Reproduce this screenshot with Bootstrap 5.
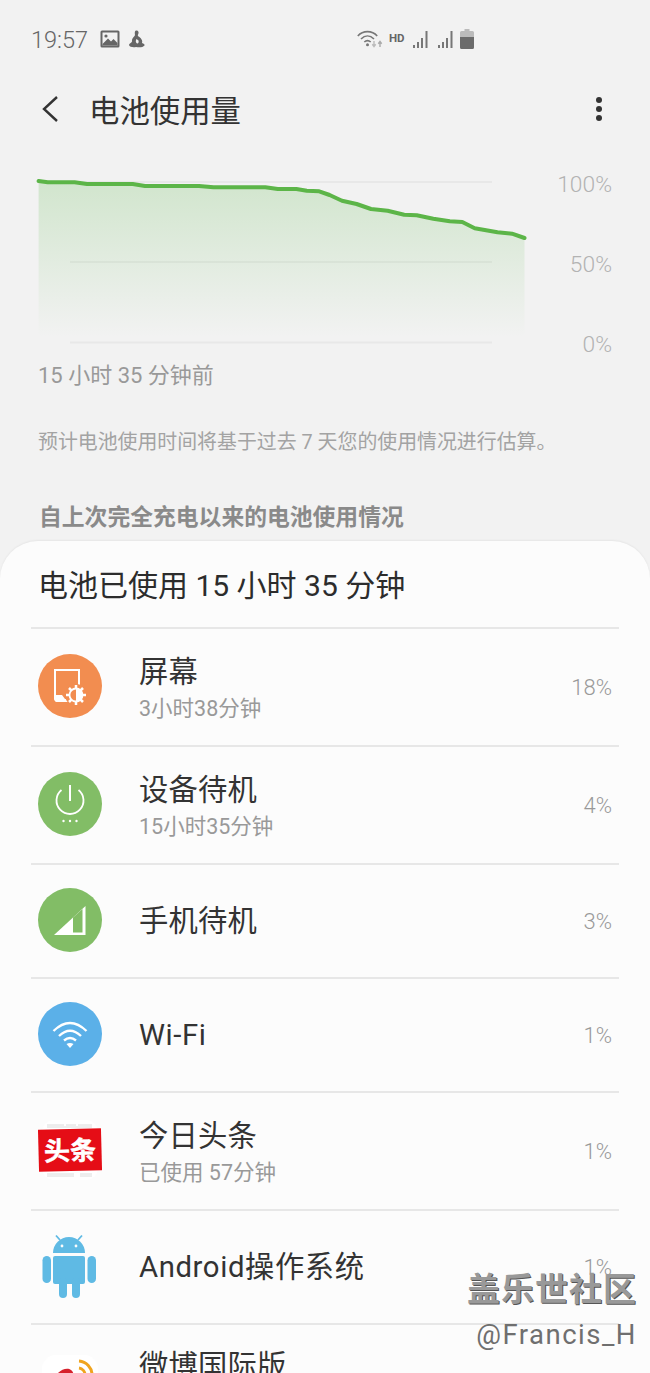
<!DOCTYPE html>
<html lang="zh-CN">
<head>
    <meta charset="UTF-8">
    <meta name="viewport" content="width=device-width, initial-scale=1.0">
    <title>电池使用量</title>
    <link href="https://cdn.jsdelivr.net/npm/bootstrap@5.3.0/dist/css/bootstrap.min.css" rel="stylesheet">
    <style>
        html, body {
            height: 1373px;
            overflow: hidden;
        }
        body {
            background-color: #f2f2f2;
            font-family: Roboto, "Noto Sans CJK SC", sans-serif;
            position: relative;
        }
        .status-bar {
            height: 78px;
            padding: 0 176px 0 31px;
            color: #666;
        }
        .status-time { font-size: 23.5px; font-weight: 300; width: 69px; margin-top: 3px; }
        .status-hd { font-size: 11.5px; font-weight: 700; width: 18px; margin: 0 5px 0 6px; }
        .status-battery { margin-left: 6px; }
        .title-bar {
            height: 66px;
            padding: 0 47px 4px 42px;
        }
        .title-text { font-size: 30.400px; color: #333; margin-left: 31px; margin-top: 6px; }
        .chart-labels {
            padding: 29px 38px 0 0;
            gap: 56px;
            color: #b3b3b3;
            font-size: 22.8px;
            font-weight: 300;
            line-height: 24px;
        }
        .chart-caption { padding-left: 38px; padding-top: 1px; font-size: 22px; line-height: 40px; color: #999; }
        .chart-note { padding-left: 38px; margin-top: 26px; font-size: 19.9px; line-height: 40px; color: #a3a3a3; padding-top: 1px; }
        .usage-heading { padding-left: 39px; margin-top: 35px; font-size: 22.8px; line-height: 40px; color: #8a8a8a; font-weight: 700; }
        .sheet {
            margin-top: 3px;
            background: #fcfcfc;
            border-radius: 38px 38px 0 0;
            box-shadow: 0 -1px 2px rgba(0, 0, 0, 0.05);
        }
        .sheet-heading { height: 86px; padding: 2px 38px 0; font-size: 30px; color: #2c2c2c; }
        .app-list { margin: 0 31px; }
        .list-group-item.app-row {
            background: transparent;
            border: 0;
            border-top: 2px solid #e7e7e7;
            border-radius: 0;
            padding: 0 7px 3px;
            height: 114px;
        }
        .list-group-item.app-row.tall { height: 118px; }
        .list-group-item.app-row.last { align-items: flex-start !important; padding-top: 23px; }
        .app-icon { width: 64px; height: 64px; margin-right: 37px; flex: none; display: block; }
        .app-name { font-size: 29.300px; line-height: 36px; color: #333; letter-spacing: 0.2px; }
        .app-name.single { margin-top: 2px; }
        .app-name.latin { letter-spacing: 0.6px; }
        .app-text { margin-top: 6px; }
        .app-sub { font-size: 21.500px; line-height: 28px; margin-top: 5px; color: #999; }
        .app-pct { font-size: 22px; font-weight: 300; color: #999; margin-top: 4px; }
        .tt-text { font-family: "Noto Sans CJK SC", sans-serif; font-weight: 700; font-size: 26px; fill: #fff; stroke: #fff; stroke-width: 0.5px; }
        .watermark {
            position: absolute;
            right: 13px;
            top: 1268px;
            text-align: right;
        }
        .wm-top { font-size: 33px; line-height: 44px; font-weight: 700; color: #999; text-shadow: 1px 1px 0 #555; letter-spacing: 1px; }
        .wm-bot { font-size: 27.500px; line-height: 44px; color: #6f6f6f; letter-spacing: 1.500px; margin-top: 1px; }
    </style>
</head>
<body>
    <div class="status-bar d-flex align-items-center">
        <span class="status-time">19:57</span>
        <svg width="20" height="18" viewBox="0 0 20 18">
            <rect width="19" height="17" x="0.5" y="0.5" rx="1.5" fill="#666"/>
            <rect width="15" height="13" x="2.5" y="2.5" fill="#f2f2f2"/>
            <circle cx="6" cy="6" r="1.6" fill="#666"/>
            <path d="M2.5 14 L8 8.5 L11 11.5 L13.5 9 L17.5 13 V15.5 H2.5 Z" fill="#666"/>
        </svg>
        <svg width="18" height="18" viewBox="0 0 18 18" class="ms-2 me-auto">
            <path d="M8.500 0.500 C10.500 0.500 11 2.500 10.300 4 C9.700 5 9.500 5.500 10.500 6.500 C13 8 15 10.500 14 13 C15.500 13.500 17 14.500 16.500 15.500 C15 17.500 11 17.500 8 17 C5 17.500 1.500 17 1 15 C1 13.500 3.500 13 4 11.500 C3.500 9.500 5 7.500 6.500 6 C7.500 5 6.500 3.500 6.800 2.500 C7 1 7.500 0.500 8.500 0.500 Z M8.500 9 C7.500 10.500 7.500 12.500 9 13.500 C10.500 13.800 11 12 10.500 10.500 Z" fill="#666" fill-rule="evenodd"/>
        </svg>
        <svg width="26" height="18" viewBox="0 0 26 18">
            <g fill="none" stroke="#777" stroke-width="1.6">
                <path d="M0.8 6 C6 0.2 15 0.2 20.2 6"/>
                <path d="M4 9 C8 5 13 5 17 9"/>
                <path d="M7.3 12 C9.5 10 11.5 10 13.7 12"/>
            </g>
            <circle cx="10.5" cy="14.8" r="1.5" fill="#777"/>
            <path d="M17 11 V16 M15.3 14.3 L17 16.5 L18.7 14.3" fill="none" stroke="#bbb" stroke-width="1.4"/>
            <path d="M23 17 V12 M21.3 13.7 L23 11.5 L24.7 13.7" fill="none" stroke="#aaa" stroke-width="1.4"/>
        </svg>
        <span class="status-hd">HD</span>
        <svg width="17" height="18" viewBox="0 0 17 18">
            <path d="M1 15h2v3H1zM5 12h2v6H5zM9 8h2v10H9zM13.5 1h2v17h-2z" fill="#777"/>
        </svg>
        <svg width="17" height="18" viewBox="0 0 17 18" class="ms-2">
            <path d="M1 15h2v3H1zM5 12h2v6H5zM9 8h2v10H9zM13.5 1h2v17h-2z" fill="#777"/>
        </svg>
        <svg width="14" height="20" viewBox="0 0 14 20" class="status-battery">
            <path d="M4.5 0h5v2h3a1.5 1.5 0 0 1 1.5 1.5V8H0V3.500A1.500 1.500 0 0 1 1.500 2h3z" fill="#bbb"/>
            <path d="M0 8h14v10.500a1.500 1.500 0 0 1-1.500 1.500h-11A1.500 1.500 0 0 1 0 18.500z" fill="#6b6b6b"/>
        </svg>
    </div>

    <div class="title-bar d-flex align-items-center">
        <svg width="16" height="26" viewBox="0 0 16 26">
            <path d="M15 1 L2 13 L15 25" fill="none" stroke="#333" stroke-width="2.400"/>
        </svg>
        <span class="title-text me-auto">电池使用量</span>
        <svg width="8" height="26" viewBox="0 0 8 26">
            <circle cx="4" cy="4" r="3" fill="#333"/>
            <circle cx="4" cy="13" r="3" fill="#333"/>
            <circle cx="4" cy="22" r="3" fill="#333"/>
        </svg>
    </div>

    <div class="d-flex justify-content-between" style="height:211px">
        <svg width="540" height="211" viewBox="0 144 540 211">
            <defs>
                <linearGradient id="chartFill" x1="0" y1="0" x2="0" y2="1">
                    <stop offset="0" stop-color="#5cb84a" stop-opacity="0.22"/>
                    <stop offset="1" stop-color="#5cb84a" stop-opacity="0"/>
                </linearGradient>
            </defs>
            <g stroke="#e8e8e8" stroke-width="2">
                <line x1="70" x2="492" y1="182" y2="182"/>
                <line x1="70" x2="492" y1="262" y2="262"/>
                <line x1="70" x2="492" y1="342.500" y2="342.500"/>
            </g>
            <path fill="url(#chartFill)" d="M38.600 181 L47.700 182.300 L74.600 182.300 L87 184 L132.700 184 L145 186 L199 186 L213.500 187.300 L265.300 187.300 L277.800 189 L296.400 189 L306.800 190.700 L319.200 191.300 L329.600 195 L342 200.700 L356.600 204 L371 209 L387.600 210.700 L404.200 214.700 L416.700 215.300 L433.300 218.700 L449.800 221.300 L462.300 222 L474.700 228.300 L497.500 232.300 L512 233.700 L524.500 238 V337 H38.600 Z"/>
            <path fill="none" stroke="#5cb548" stroke-width="4" stroke-linejoin="round" stroke-linecap="round" d="M38.600 181 L47.700 182.300 L74.600 182.300 L87 184 L132.700 184 L145 186 L199 186 L213.500 187.300 L265.300 187.300 L277.800 189 L296.400 189 L306.800 190.700 L319.200 191.300 L329.600 195 L342 200.700 L356.600 204 L371 209 L387.600 210.700 L404.200 214.700 L416.700 215.300 L433.300 218.700 L449.800 221.300 L462.300 222 L474.700 228.300 L497.500 232.300 L512 233.700 L524.500 238"/>
        </svg>
        <div class="chart-labels d-flex flex-column text-end">
            <span>100%</span>
            <span>50%</span>
            <span>0%</span>
        </div>
    </div>

    <div class="chart-caption">15 小时 35 分钟前</div>
    <div class="chart-note">预计电池使用时间将基于过去 7 天您的使用情况进行估算。</div>
    <div class="usage-heading">自上次完全充电以来的电池使用情况</div>

    <div class="sheet">
        <div class="sheet-heading d-flex align-items-center">电池已使用 15 小时 35 分钟</div>
        <div class="list-group app-list">
            <div class="list-group-item app-row tall d-flex align-items-center">
                <svg class="app-icon" viewBox="0 0 64 64">
                    <circle cx="32" cy="32" r="32" fill="#f28d50"/>
                    <path d="M32 47 H20 C17.500 47 17 45 17 43 V16 H41 V31" fill="none" stroke="#fff" stroke-width="2"/>
                    <path d="M17 41 H24 L27 45 H32 V48 H19 C17 48 16 46 16 44 Z" fill="#fff"/>
                    <circle cx="38" cy="41" r="11" fill="#f28d50"/>
                    <g stroke="#fff" stroke-width="2.500">
                        <path d="M38 31 V51 M28 41 H48 M31 34 L45 48 M45 34 L31 48"/>
                    </g>
                    <circle cx="38" cy="41" r="6.500" fill="#f28d50" stroke="#fff" stroke-width="1.800"/>
                    <path d="M38 34.500 A6.500 6.500 0 0 1 38 47.500 Z" fill="#fff"/>
                </svg>
                <div class="app-text me-auto">
                    <div class="app-name">屏幕</div>
                    <div class="app-sub">3小时38分钟</div>
                </div>
                <span class="app-pct">18%</span>
            </div>
            <div class="list-group-item app-row tall d-flex align-items-center">
                <svg class="app-icon" viewBox="0 0 64 64">
                    <circle cx="32" cy="32" r="32" fill="#82bd66"/>
                    <path d="M23.500 18 A13.500 13.500 0 1 0 40.500 18" fill="none" stroke="#fff" stroke-width="1.800"/>
                    <path d="M32 13 V29" stroke="#fff" stroke-width="2"/>
                    <circle cx="25.500" cy="49" r="1.200" fill="#fff"/>
                    <circle cx="32" cy="49" r="1.200" fill="#fff"/>
                    <circle cx="38.500" cy="49" r="1.200" fill="#fff"/>
                </svg>
                <div class="app-text me-auto">
                    <div class="app-name">设备待机</div>
                    <div class="app-sub">15小时35分钟</div>
                </div>
                <span class="app-pct">4%</span>
            </div>
            <div class="list-group-item app-row d-flex align-items-center">
                <svg class="app-icon" viewBox="0 0 64 64">
                    <circle cx="32" cy="32" r="32" fill="#82bd66"/>
                    <path d="M16 47 L47.500 18 V47 Z" fill="#fff"/>
                    <path d="M35 29.500 L44.500 21 V44.500 H35 Z" fill="#82bd66"/>
                </svg>
                <div class="app-name single me-auto">手机待机</div>
                <span class="app-pct">3%</span>
            </div>
            <div class="list-group-item app-row d-flex align-items-center">
                <svg class="app-icon" viewBox="0 0 64 64">
                    <circle cx="32" cy="32" r="32" fill="#5bb0e8"/>
                    <g fill="none" stroke="#fff" stroke-width="2.400">
                        <path d="M15.500 29 Q32 13 48.500 29"/>
                        <path d="M21 34 Q32 23.500 43 34"/>
                        <path d="M26 38.500 Q32 33.500 38 38.500"/>
                    </g>
                    <path d="M28.500 42 Q32 40 35.500 42 L32 46 Z" fill="#fff"/>
                </svg>
                <div class="app-name single latin me-auto">Wi-Fi</div>
                <span class="app-pct">1%</span>
            </div>
            <div class="list-group-item app-row tall d-flex align-items-center">
                <svg class="app-icon" viewBox="0 0 64 64">
                    <rect x="4" y="2" width="56" height="60" rx="12" fill="#fff"/>
                    <path d="M9 7 H26 M28 7 H38 M40 7 H54 M9 9 H54 M9 56 H36 M42 56 H54 M9 58 H36 M42 58 H54" stroke="#dcdcdc" stroke-width="1"/>
                    <g transform="rotate(-1.500 32 32)">
                        <rect x="0.500" y="11" width="63" height="42" fill="#e50d16"/>
                        <text class="tt-text" x="32" y="42" text-anchor="middle">头条</text>
                    </g>
                </svg>
                <div class="app-text me-auto">
                    <div class="app-name">今日头条</div>
                    <div class="app-sub">已使用 57分钟</div>
                </div>
                <span class="app-pct">1%</span>
            </div>
            <div class="list-group-item app-row d-flex align-items-center">
                <svg class="app-icon" viewBox="0 0 64 64">
                    <g fill="#5fbae4">
                        <path d="M15 19 A16 16 0 0 1 47 19 Z"/>
                        <rect x="15" y="22" width="32" height="28" rx="2"/>
                        <rect x="4.500" y="22" width="8.500" height="27" rx="4.250"/>
                        <rect x="49.500" y="22" width="8.500" height="27" rx="4.250"/>
                        <rect x="21" y="44" width="8" height="20" rx="4"/>
                        <rect x="34" y="44" width="8" height="20" rx="4"/>
                    </g>
                    <path d="M22 6 L18 1.500 M40 6 L44 1.500" stroke="#5fbae4" stroke-width="1.800"/>
                    <circle cx="24" cy="12" r="1.400" fill="#fcfcfc"/>
                    <circle cx="38" cy="12" r="1.400" fill="#fcfcfc"/>
                </svg>
                <div class="app-name single latin me-auto">Android操作系统</div>
                <span class="app-pct">1%</span>
            </div>
            <div class="list-group-item app-row last d-flex align-items-center">
                <svg class="app-icon" viewBox="0 0 64 64">
                    <rect x="4" y="7" width="56" height="56" rx="14" fill="#fff"/>
                    <path d="M15 34 C17 24 28 18 33 22 C37 25 34 28 38 30 C44 33 42 44 28 46 C18 47 13 42 15 34 Z" fill="#d6212c"/>
                    <g fill="none" stroke="#f0a41e" stroke-width="3">
                        <path d="M41 13 A14 14 0 0 1 54 27"/>
                        <path d="M41 20 A7 7 0 0 1 47 27"/>
                    </g>
                </svg>
                <div class="app-name me-auto">微博国际版</div>
            </div>
        </div>
    </div>

    <div class="watermark">
        <div class="wm-top">盖乐世社区</div>
        <div class="wm-bot">@Francis_H</div>
    </div>
<script src="https://cdn.jsdelivr.net/npm/bootstrap@5.3.0/dist/js/bootstrap.bundle.min.js"></script>
</body>
</html>
